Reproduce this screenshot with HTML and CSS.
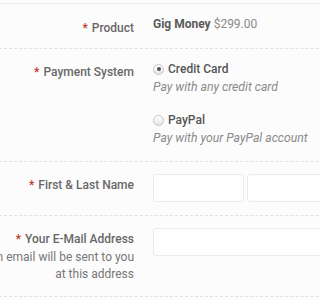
FILE: index.html
```html
<!DOCTYPE html>
<html>
<head>
<meta charset="utf-8">
<link rel="stylesheet" href="styles.css">
</head>
<body>
<div class="form">
  <div class="row row-first">
    <div class="label"><span class="req">*</span>Product</div>
    <div class="value"><b class="prod">Gig Money</b> <span class="price">$299.00</span></div>
  </div>
  <div class="row">
    <div class="label"><span class="req">*</span>Payment System</div>
    <div class="value">
      <div class="option">
        <div class="opt-title"><span class="radio checked"></span>Credit Card</div>
        <div class="opt-desc">Pay with any credit card</div>
      </div>
      <div class="option">
        <div class="opt-title"><span class="radio"></span>PayPal</div>
        <div class="opt-desc">Pay with your PayPal account</div>
      </div>
    </div>
  </div>
  <div class="row">
    <div class="label"><span class="req">*</span>First &amp; Last Name</div>
    <div class="value value-input">
      <div class="input half"></div>
      <div class="input half"></div>
    </div>
  </div>
  <div class="row">
    <div class="label"><span class="req">*</span>Your E-Mail Address<div class="help">An email will be sent to you at this address</div></div>
    <div class="value value-input">
      <div class="input full"></div>
    </div>
  </div>
</div>
</body>
</html>
```
FILE: styles.css
```css
html, body {
  margin: 0;
  padding: 0;
  overflow: hidden;
  background: #fcfcfc;
}
body {
  font-family: Roboto, "Liberation Sans", sans-serif;
  font-size: 12px;
  line-height: 17px;
  color: #666;
}
.form {
  width: 440px;
  margin-left: -16px;
  margin-top: 3px;
  border-top: 1px solid #efefef;
}
.row {
  display: grid;
  grid-template-columns: 150px 1fr;
  column-gap: 19px;
  border-bottom: 1px dashed #e2e2e2;
}
.label {
  text-align: right;
  font-weight: 500;
  color: #686868;
  padding: 15px 0 13px;
}
.row-first .label {
  padding: 16px 0 11px;
}
.req {
  color: #c0392b;
  margin-right: 4px;
}
.help {
  font-weight: 400;
  color: #777;
  margin-top: 1px;
}
.value {
  padding: 12px 0 14px;
}
.row-first .value {
  padding: 12px 0 15px;
}
.value-input {
  padding: 12px 0 13px;
  display: flex;
  gap: 3px;
}
.prod {
  font-weight: 700;
  color: #5a5a5a;
}
.price {
  color: #8a8a8a;
}
.option + .option {
  margin-top: 16px;
}
.opt-title {
  display: flex;
  align-items: center;
  font-weight: 500;
  color: #555;
}
.opt-desc {
  margin-top: 1px;
  font-style: italic;
  color: #8a8a8a;
  font-size: 12.2px;
}
.radio {
  width: 9px;
  height: 9px;
  border: 1px solid #c4c4c4;
  border-radius: 50%;
  background: linear-gradient(#fff, #e6e6e6);
  margin-right: 4px;
  margin-top: -1px;
  position: relative;
  box-sizing: content-box;
}
.radio.checked::after {
  content: "";
  position: absolute;
  left: 2.5px;
  top: 2.5px;
  width: 4px;
  height: 4px;
  border-radius: 50%;
  background: #555;
}
.input {
  height: 26px;
  border: 1px solid #ececec;
  border-radius: 3px;
  background: #fefefe;
}
.half {
  width: 89px;
}
.full {
  width: 260px;
}
```
